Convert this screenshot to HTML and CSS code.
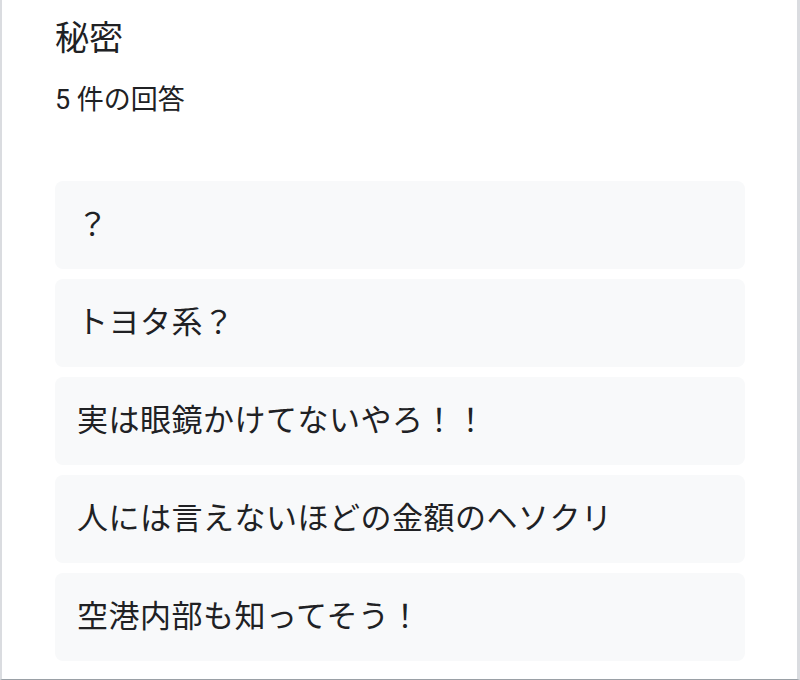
FILE: index.html
```html
<!DOCTYPE html>
<html lang="ja">
<head>
<meta charset="utf-8">
<link rel="stylesheet" href="styles.css">
</head>
<body>
<div class="card">
  <div class="title">秘密</div>
  <div class="count">5 件の回答</div>
  <div class="answers">
    <div class="answer">？</div>
    <div class="answer">トヨタ系？</div>
    <div class="answer">実は眼鏡かけてないやろ！！</div>
    <div class="answer">人には言えないほどの金額のヘソクリ</div>
    <div class="answer">空港内部も知ってそう！</div>
  </div>
</div>
</body>
</html>
```
FILE: styles.css
```css
html, body {
  margin: 0;
  padding: 0;
  background: #ffffff;
}
body {
  font-family: Roboto, "Noto Sans CJK JP", sans-serif;
  color: #202124;
}
.card {
  box-sizing: border-box;
  width: 800px;
  height: 680px;
  border-left: 2px solid #dadce0;
  border-right: 3px solid #dadce0;
  border-bottom: 1px solid #9aa0a6;
  padding: 18px 52px 0 53px;
  overflow: hidden;
}
.title {
  font-size: 34px;
  line-height: 40px;
}
.count {
  margin-top: 24px;
  font-size: 27px;
  line-height: 36px;
}
.answers {
  margin-top: 63px;
  display: flex;
  flex-direction: column;
  gap: 10px;
}
.answer {
  background: #f8f9fa;
  border-radius: 8px;
  padding: 24px 22px;
  font-size: 31px;
  line-height: 40px;
  letter-spacing: 0.5px;
}
```
